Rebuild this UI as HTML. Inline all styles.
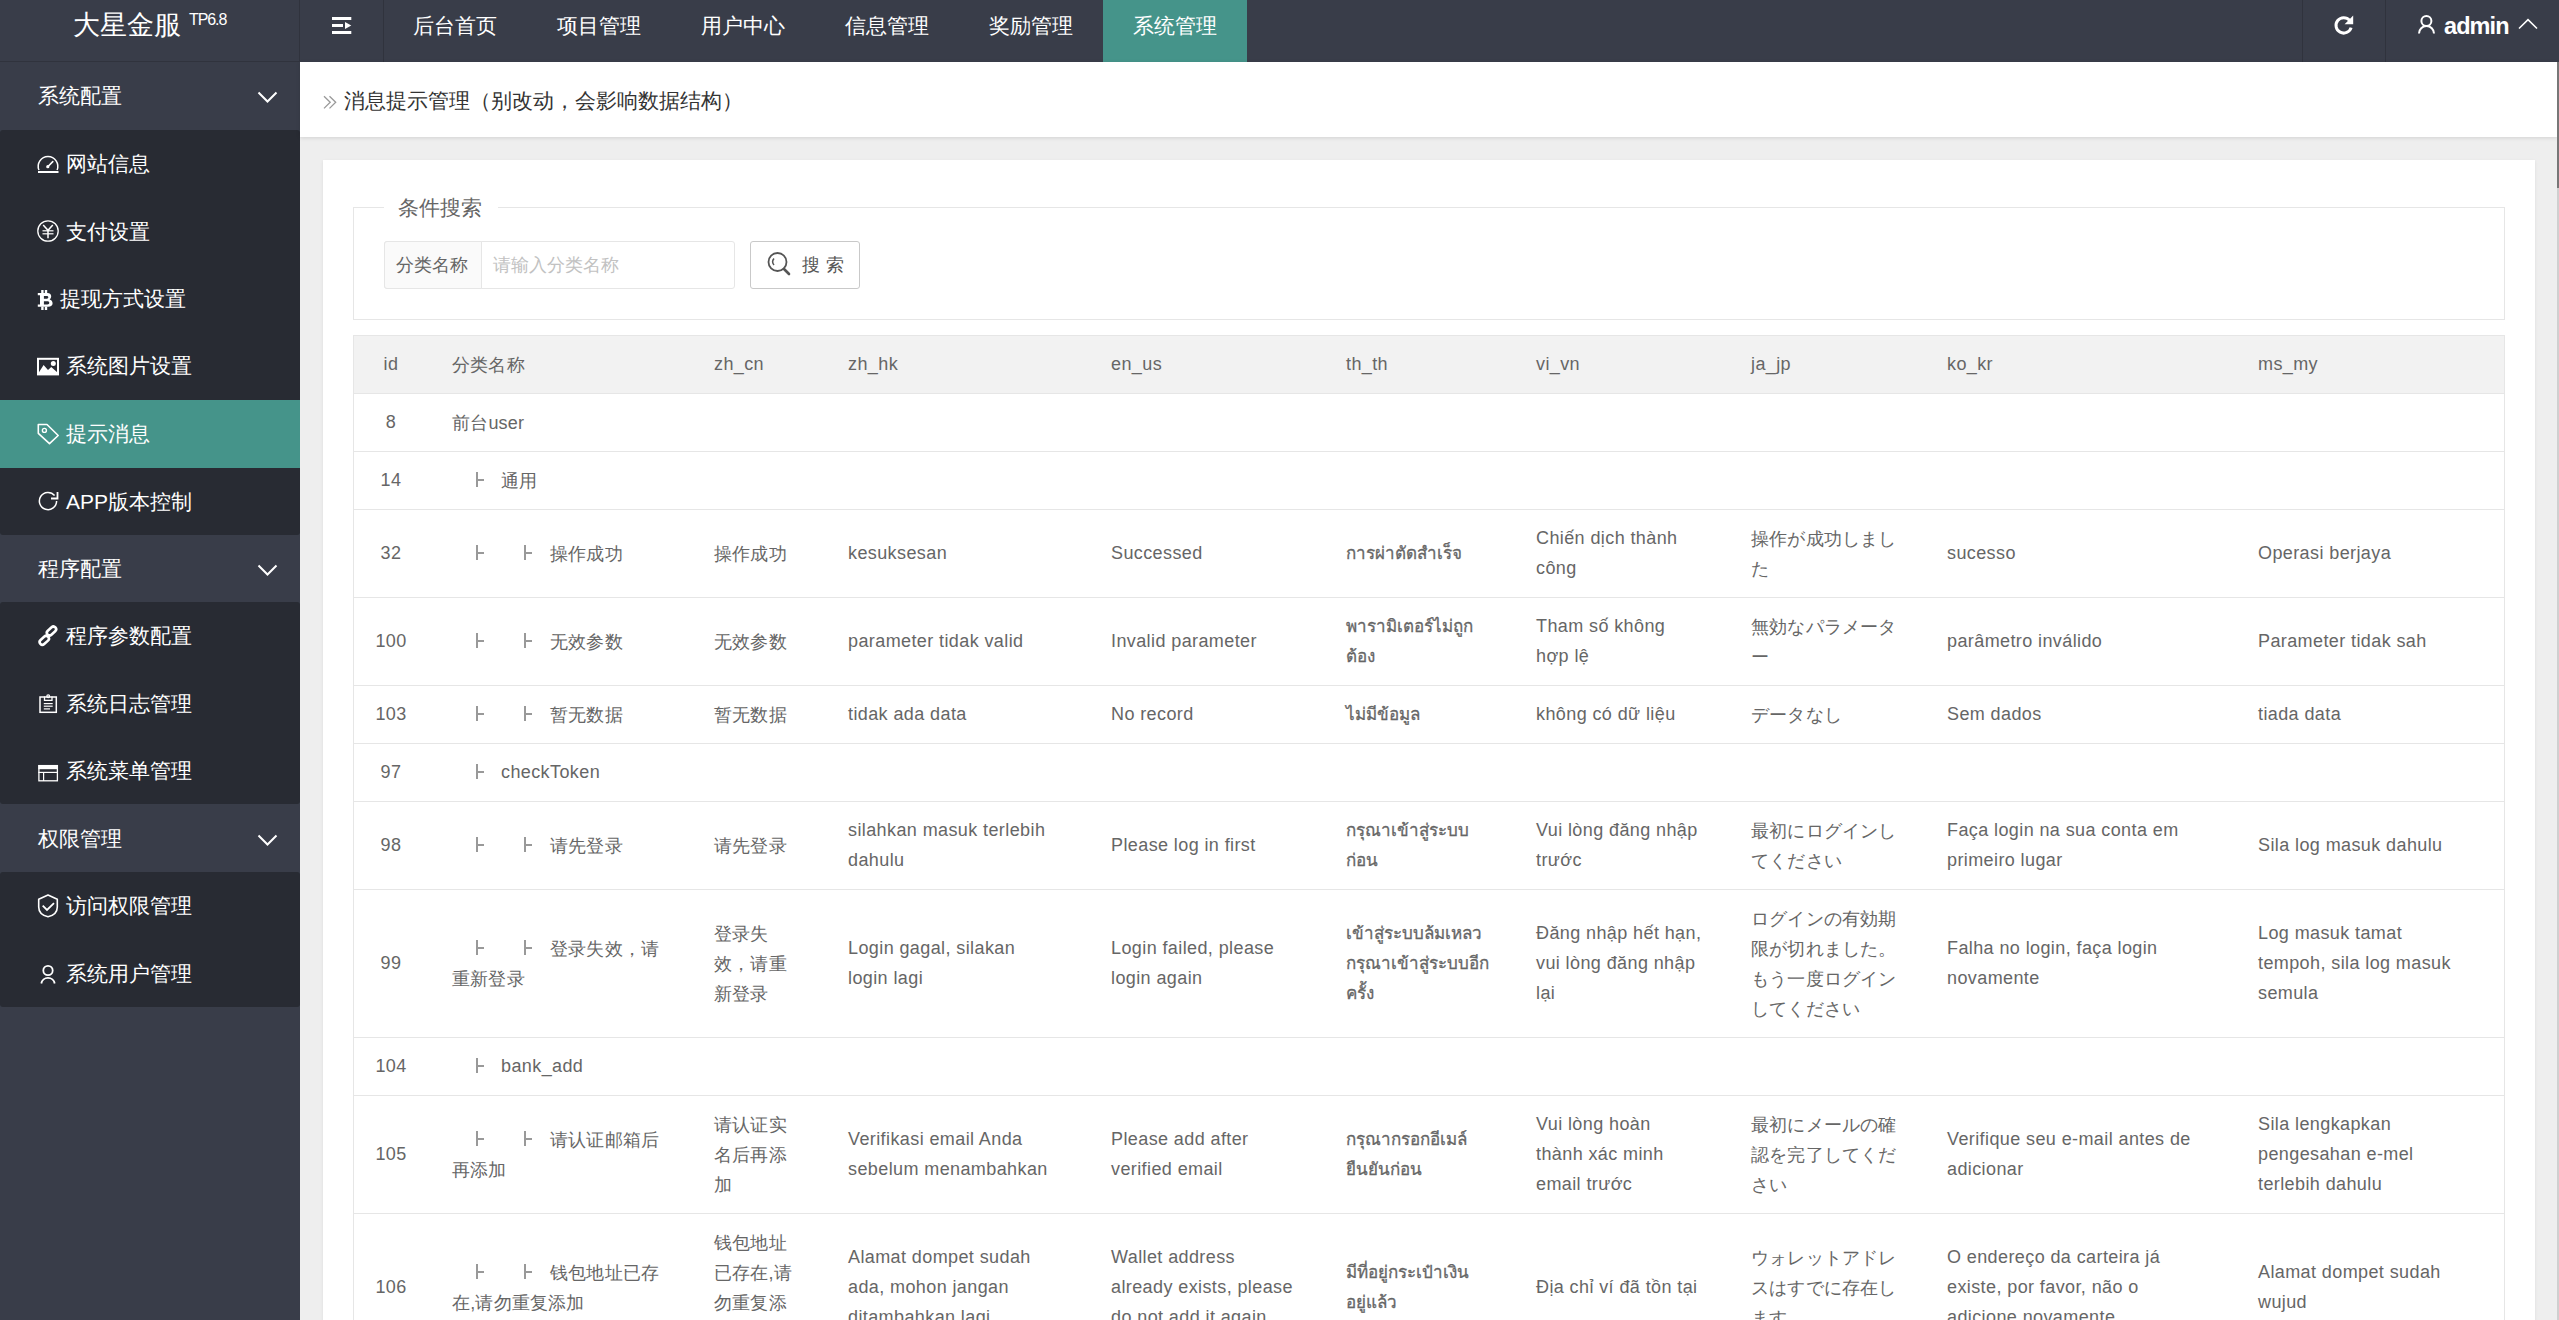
<!DOCTYPE html>
<html><head><meta charset="utf-8"><title>消息提示管理</title>
<style>
*{margin:0;padding:0;box-sizing:border-box}
html,body{width:2559px;height:1320px;overflow:hidden;background:#eee;font-family:"Liberation Sans",sans-serif}
.a{position:absolute}
.hdr{left:0;top:0;width:2559px;height:62px;background:#393d49}
.nav{top:0;height:62px;width:144px;color:#fff;font-size:21px;line-height:51px;text-align:center}
.side{left:0;top:62px;width:300px;height:1258px;background:#393d49}
.grp{left:0;width:300px;height:68px;color:#fff;font-size:21px}
.grp span{position:absolute;left:38px;top:0;line-height:68px}
.subb{left:0;width:300px;background:#282b33;border-radius:3px}
.it{left:0;width:300px;height:67.5px;color:#fff;font-size:21px}
.it span{position:absolute;left:66px;top:0;line-height:67px}
.it svg{position:absolute;left:37px}
.cell{color:#666;font-size:18px;line-height:30px;white-space:nowrap;letter-spacing:0.2px}
.th{font-size:17px;letter-spacing:0;-webkit-text-stroke:0.3px #666;margin-top:1px}
.lt{letter-spacing:0.4px}
.cj{margin-top:1px}
</style></head><body>

<div class="a hdr"></div>
<div class="a" style="left:0;top:61px;width:300px;height:1px;background:#30333d"></div>
<div class="a" style="left:73px;top:6px;color:#fff;font-size:27px;line-height:38px;white-space:nowrap">大星金服</div>
<div class="a" style="left:189px;top:10px;color:#fff;font-size:16px;line-height:20px;letter-spacing:-1.1px">TP6.8</div>
<div class="a" style="left:299px;top:0;width:1px;height:62px;background:#30333d"></div>
<div class="a" style="left:383px;top:0;width:1px;height:62px;background:#30333d"></div>
<div class="a" style="left:2302px;top:0;width:1px;height:62px;background:#30333d"></div>
<div class="a" style="left:2385px;top:0;width:1px;height:62px;background:#30333d"></div>
<svg class="a" style="left:0;top:0" width="400" height="62" viewBox="0 0 400 62" fill="#fff">
<rect x="332" y="17" width="19.3" height="3"/>
<rect x="332" y="24" width="11" height="3"/>
<polygon points="345,22 351.3,25.5 345,29"/>
<rect x="332" y="31" width="19.3" height="3"/>
</svg>
<div class="a nav" style="left:383px;">后台首页</div>
<div class="a nav" style="left:527px;">项目管理</div>
<div class="a nav" style="left:671px;">用户中心</div>
<div class="a nav" style="left:815px;">信息管理</div>
<div class="a nav" style="left:959px;">奖励管理</div>
<div class="a nav" style="left:1103px;background:#45948a;">系统管理</div>
<svg class="a" style="left:2300px;top:0" width="259" height="62" viewBox="2300 0 259 62" fill="none" stroke="#fff">
<path d="M2351.1 27.6 A7.7 7.7 0 1 1 2349.6 20.4" stroke-width="3"/>
<polygon points="2353.2,15.6 2353.2,24.2 2344.6,24.2" fill="#fff" stroke="none"/>
<circle cx="2426.4" cy="20.9" r="5" stroke-width="2"/>
<path d="M2419 33.5 A7.5 7.5 0 0 1 2434 33.5" stroke-width="2"/>
<polyline points="2519,28.5 2528,19.6 2537,28.5" stroke-width="1.6"/>
</svg>
<div class="a" style="left:2444px;top:9px;color:#fff;font-size:23.5px;font-weight:bold;line-height:34px;letter-spacing:-0.9px">admin</div>
<div class="a side"></div>
<div class="a grp" style="top:62px"><span>系统配置</span></div>
<svg class="a" style="left:256px;top:90px" width="24" height="14" viewBox="0 0 24 14"><polyline points="2.5,2.5 11.5,11.5 20.5,2.5" fill="none" stroke="#fff" stroke-width="2"/></svg>
<div class="a subb" style="top:130px;height:405px"></div>
<div class="a it" style="top:130px;height:68px;"><span style="left:66px">网站信息</span></div>
<div class="a it" style="top:198px;height:67px;"><span style="left:66px">支付设置</span></div>
<div class="a it" style="top:265px;height:67px;"><span style="left:60px">提现方式设置</span></div>
<div class="a it" style="top:332px;height:68px;"><span style="left:66px">系统图片设置</span></div>
<div class="a it" style="top:400px;height:68px;background:#45948a;"><span style="left:66px">提示消息</span></div>
<div class="a it" style="top:468px;height:67px;"><span style="left:66px">APP版本控制</span></div>
<div class="a grp" style="top:535px"><span>程序配置</span></div>
<svg class="a" style="left:256px;top:563px" width="24" height="14" viewBox="0 0 24 14"><polyline points="2.5,2.5 11.5,11.5 20.5,2.5" fill="none" stroke="#fff" stroke-width="2"/></svg>
<div class="a subb" style="top:602px;height:202px"></div>
<div class="a it" style="top:602px;height:68px;"><span style="left:66px">程序参数配置</span></div>
<div class="a it" style="top:670px;height:67px;"><span style="left:66px">系统日志管理</span></div>
<div class="a it" style="top:737px;height:67px;"><span style="left:66px">系统菜单管理</span></div>
<div class="a grp" style="top:805px"><span>权限管理</span></div>
<svg class="a" style="left:256px;top:833px" width="24" height="14" viewBox="0 0 24 14"><polyline points="2.5,2.5 11.5,11.5 20.5,2.5" fill="none" stroke="#fff" stroke-width="2"/></svg>
<div class="a subb" style="top:872px;height:135px"></div>
<div class="a it" style="top:872px;height:68px;"><span style="left:66px">访问权限管理</span></div>
<div class="a it" style="top:940px;height:67px;"><span style="left:66px">系统用户管理</span></div>
<svg class="a" style="left:0;top:0" width="300" height="1320" viewBox="0 0 300 1320" fill="none" stroke="#fff">
<path d="M38.93 170 A9.8 9.8 0 1 1 57.07 170" stroke-width="1.5"/>
<rect x="38" y="171" width="20.5" height="2" fill="#fff" stroke="none"/>
<line x1="47.8" y1="166.7" x2="52.8" y2="161.6" stroke-width="1.6" stroke-linecap="round"/>
<circle cx="47.8" cy="166.7" r="1.6" fill="#fff" stroke="none"/>

<circle cx="48" cy="231" r="10.2" stroke-width="1.3"/>
<polyline points="43.2,225 48,230.3 52.8,225" stroke-width="1.5"/>
<line x1="48" y1="230" x2="48" y2="238.2" stroke-width="1.5"/>
<line x1="42.5" y1="230.8" x2="53.5" y2="230.8" stroke-width="1.2"/>
<line x1="42.5" y1="233.8" x2="53.5" y2="233.8" stroke-width="1.2"/>

<g transform="translate(37,290)" fill="#fff" stroke="none">
<path fill-rule="evenodd" d="M0.8 3 H10.5 C13 3 14.2 4.3 14.2 6.2 C14.2 7.8 13.3 8.9 12.6 9.4 C14.3 9.9 15.6 11.2 15.6 13.2 C15.6 15.3 14 16.8 11.2 16.8 H0.8 V14.5 H3 V5.3 H0.8 Z M6.9 5.9 V8.8 H9.8 C10.8 8.8 11.3 8.2 11.3 7.35 C11.3 6.5 10.8 5.9 9.8 5.9 Z M6.9 11.2 V14.4 H10.3 C11.6 14.4 12.3 13.7 12.3 12.8 C12.3 11.9 11.6 11.2 10.3 11.2 Z"/>
<rect x="4.2" y="0" width="2.4" height="3.2"/><rect x="7.8" y="0" width="2.4" height="3.2"/>
<rect x="4.2" y="16.6" width="2.4" height="3.4"/><rect x="7.8" y="16.6" width="2.4" height="3.4"/>
</g>

<rect x="38" y="358.8" width="20" height="15.6" stroke-width="2"/>
<polygon points="38.5,373 43.6,365 48,370 51.2,367 57.5,372.5 57.5,374.5 38.5,374.5" fill="#fff" stroke="none"/>
<circle cx="53.3" cy="363.5" r="2.5" fill="#fff" stroke="none"/>

<polygon points="38.3,424.5 47,424.5 58.2,435.5 49.5,443.7 38.3,433.3" stroke-width="1.6" stroke-linejoin="round"/>
<circle cx="44.4" cy="430.4" r="2" stroke-width="1.4"/>

<path d="M56.6 501 A8.6 8.6 0 1 1 54.6 495.5" stroke-width="1.5"/>
<polyline points="51,498.5 57.5,498.5 57.5,492" stroke-width="1.8"/>

<rect x="-5.25" y="-2.7" width="10.5" height="5.4" rx="2.7" transform="translate(51.5,631) rotate(-42)" stroke-width="2.6"/>
<rect x="-5.25" y="-2.7" width="10.5" height="5.4" rx="2.7" transform="translate(44.3,640.3) rotate(-42)" stroke-width="2.6"/>

<rect x="40" y="697" width="16.3" height="15.3" stroke-width="1.5"/>
<path d="M44.5 696.5 V700.3 H52 V696.5" stroke-width="1.3"/>
<circle cx="48.2" cy="696.3" r="1.4" stroke-width="1.2"/>
<line x1="43.8" y1="703.6" x2="52.7" y2="703.6" stroke-width="1.2"/>
<line x1="43.8" y1="706.2" x2="52.7" y2="706.2" stroke-width="1.2"/>
<line x1="43.8" y1="708.9" x2="50" y2="708.9" stroke-width="1.2"/>

<rect x="38.9" y="765.6" width="18.5" height="15.2" stroke-width="1.3"/>
<rect x="38.3" y="765" width="19.7" height="4.2" fill="#fff" stroke="none"/>
<line x1="38.3" y1="772.4" x2="58" y2="772.4" stroke-width="1.2"/>
<line x1="43.6" y1="772.4" x2="43.6" y2="781" stroke-width="1.2"/>

<path d="M48 895 L57.3 899.3 L57.3 907 C57.3 912 53.5 915.5 48 916.8 C42.5 915.5 38.7 912 38.7 907 L38.7 899.3 Z" stroke-width="1.6" stroke-linejoin="round"/>
<polyline points="42.7,905.7 47,910 54,903.2" stroke-width="1.8"/>

<circle cx="48" cy="970.5" r="4.7" stroke-width="1.8"/>
<path d="M41.3 983.5 A6.8 6.8 0 0 1 54.7 983.5" stroke-width="1.8"/>
</svg>
<div class="a" style="left:300px;top:62px;width:2257px;height:75px;background:#fff;box-shadow:0 1px 4px rgba(0,0,0,.12)"></div>
<svg class="a" style="left:300px;top:62px" width="60" height="75" viewBox="300 62 60 75" fill="none" stroke="#999" stroke-width="1.3"><polyline points="324,96.2 330.2,102.3 324,108.4"/><polyline points="329.5,96.2 335.7,102.3 329.5,108.4"/></svg>
<div class="a" style="left:344px;top:86px;color:#333;font-size:21px;line-height:30px;white-space:nowrap">消息提示管理（别改动，会影响数据结构）</div>
<div class="a" style="left:2557px;top:62px;width:2px;height:1258px;background:#cfcfcf"></div>
<div class="a" style="left:2557px;top:62px;width:2px;height:126px;background:#777"></div>
<div class="a" style="left:323px;top:160px;width:2212px;height:1200px;background:#fff;box-shadow:0 1px 3px rgba(0,0,0,.08)"></div>
<div class="a" style="left:353px;top:207px;width:2152px;height:113px;border:1px solid #e6e6e6"></div>
<div class="a" style="left:384px;top:193px;width:114px;height:30px;background:#fff"></div>
<div class="a" style="left:398px;top:193px;color:#666;font-size:21px;line-height:30px;white-space:nowrap">条件搜索</div>
<div class="a" style="left:384px;top:241px;width:351px;height:48px;border:1px solid #e6e6e6;border-radius:3px;background:#fff"></div>
<div class="a" style="left:384px;top:241px;width:98px;height:48px;border:1px solid #e6e6e6;border-radius:3px 0 0 3px;background:#fafafa"></div>
<div class="a" style="left:396px;top:250px;color:#666;font-size:18px;line-height:30px;white-space:nowrap">分类名称</div>
<div class="a" style="left:493px;top:250px;color:#c2c2c2;font-size:18px;line-height:30px;white-space:nowrap">请输入分类名称</div>
<div class="a" style="left:750px;top:241px;width:110px;height:48px;border:1px solid #c9c9c9;border-radius:3px;background:#fff"></div>
<svg class="a" style="left:765px;top:250px" width="28" height="28" viewBox="0 0 28 28"><circle cx="12.5" cy="12" r="9" fill="none" stroke="#555" stroke-width="1.8"/><path d="M9 8.5 A5 5 0 0 0 9 15" fill="none" stroke="#555" stroke-width="1.5"/><line x1="19" y1="19" x2="24" y2="24" stroke="#555" stroke-width="2.6" stroke-linecap="round"/></svg>
<div class="a" style="left:802px;top:250px;color:#555;font-size:18px;line-height:30px;white-space:nowrap;letter-spacing:6px">搜索</div>
<div class="a" style="left:353px;top:335px;width:2152px;height:1100px;border:1px solid #e6e6e6;border-bottom:none"></div>
<div class="a" style="left:354px;top:336px;width:2150px;height:57px;background:#f2f2f2"></div>
<div class="a" style="left:353px;top:393px;width:2152px;height:1px;background:#e6e6e6"></div>
<div class="a cell lt" style="left:391px;top:349px;width:80px;margin-left:-40px;text-align:center">id</div>
<div class="a cell cj" style="left:452px;top:349px">分类名称</div>
<div class="a cell lt" style="left:714px;top:349px">zh_cn</div>
<div class="a cell lt" style="left:848px;top:349px">zh_hk</div>
<div class="a cell lt" style="left:1111px;top:349px">en_us</div>
<div class="a cell lt" style="left:1346px;top:349px">th_th</div>
<div class="a cell lt" style="left:1536px;top:349px">vi_vn</div>
<div class="a cell lt" style="left:1751px;top:349px">ja_jp</div>
<div class="a cell lt" style="left:1947px;top:349px">ko_kr</div>
<div class="a cell lt" style="left:2258px;top:349px">ms_my</div>
<div class="a" style="left:353px;top:451px;width:2152px;height:1px;background:#e6e6e6"></div>
<div class="a cell lt" style="left:391px;top:407px;width:80px;margin-left:-40px;text-align:center">8</div>
<div class="a cell cj" style="left:452px;top:407px">前台user</div>
<div class="a" style="left:353px;top:509px;width:2152px;height:1px;background:#e6e6e6"></div>
<div class="a cell lt" style="left:391px;top:465px;width:80px;margin-left:-40px;text-align:center">14</div>
<div class="a" style="left:476px;top:472px;width:2px;height:15px;background:#999"></div>
<div class="a" style="left:478px;top:479px;width:6px;height:2px;background:#999"></div>
<div class="a cell cj" style="left:501px;top:465px">通用</div>
<div class="a" style="left:353px;top:597px;width:2152px;height:1px;background:#e6e6e6"></div>
<div class="a cell lt" style="left:391px;top:538px;width:80px;margin-left:-40px;text-align:center">32</div>
<div class="a" style="left:476px;top:545px;width:2px;height:15px;background:#999"></div>
<div class="a" style="left:478px;top:552px;width:6px;height:2px;background:#999"></div>
<div class="a" style="left:524px;top:545px;width:2px;height:15px;background:#999"></div>
<div class="a" style="left:526px;top:552px;width:6px;height:2px;background:#999"></div>
<div class="a cell cj" style="left:550px;top:538px">操作成功</div>
<div class="a cell cj" style="left:714px;top:538px">操作成功</div>
<div class="a cell lt" style="left:848px;top:538px">kesuksesan</div>
<div class="a cell lt" style="left:1111px;top:538px">Successed</div>
<div class="a cell th" style="left:1346px;top:538px">การผ่าตัดสำเร็จ</div>
<div class="a cell lt" style="left:1536px;top:523px">Chiến dịch thành<br>công</div>
<div class="a cell cj" style="left:1751px;top:523px">操作が成功しまし<br>た</div>
<div class="a cell lt" style="left:1947px;top:538px">sucesso</div>
<div class="a cell lt" style="left:2258px;top:538px">Operasi berjaya</div>
<div class="a" style="left:353px;top:685px;width:2152px;height:1px;background:#e6e6e6"></div>
<div class="a cell lt" style="left:391px;top:626px;width:80px;margin-left:-40px;text-align:center">100</div>
<div class="a" style="left:476px;top:633px;width:2px;height:15px;background:#999"></div>
<div class="a" style="left:478px;top:640px;width:6px;height:2px;background:#999"></div>
<div class="a" style="left:524px;top:633px;width:2px;height:15px;background:#999"></div>
<div class="a" style="left:526px;top:640px;width:6px;height:2px;background:#999"></div>
<div class="a cell cj" style="left:550px;top:626px">无效参数</div>
<div class="a cell cj" style="left:714px;top:626px">无效参数</div>
<div class="a cell lt" style="left:848px;top:626px">parameter tidak valid</div>
<div class="a cell lt" style="left:1111px;top:626px">Invalid parameter</div>
<div class="a cell th" style="left:1346px;top:611px">พารามิเตอร์ไม่ถูก<br>ต้อง</div>
<div class="a cell lt" style="left:1536px;top:611px">Tham số không<br>hợp lệ</div>
<div class="a cell cj" style="left:1751px;top:611px">無効なパラメータ<br>ー</div>
<div class="a cell lt" style="left:1947px;top:626px">parâmetro inválido</div>
<div class="a cell lt" style="left:2258px;top:626px">Parameter tidak sah</div>
<div class="a" style="left:353px;top:743px;width:2152px;height:1px;background:#e6e6e6"></div>
<div class="a cell lt" style="left:391px;top:699px;width:80px;margin-left:-40px;text-align:center">103</div>
<div class="a" style="left:476px;top:706px;width:2px;height:15px;background:#999"></div>
<div class="a" style="left:478px;top:713px;width:6px;height:2px;background:#999"></div>
<div class="a" style="left:524px;top:706px;width:2px;height:15px;background:#999"></div>
<div class="a" style="left:526px;top:713px;width:6px;height:2px;background:#999"></div>
<div class="a cell cj" style="left:550px;top:699px">暂无数据</div>
<div class="a cell cj" style="left:714px;top:699px">暂无数据</div>
<div class="a cell lt" style="left:848px;top:699px">tidak ada data</div>
<div class="a cell lt" style="left:1111px;top:699px">No record</div>
<div class="a cell th" style="left:1346px;top:699px">ไม่มีข้อมูล</div>
<div class="a cell lt" style="left:1536px;top:699px">không có dữ liệu</div>
<div class="a cell cj" style="left:1751px;top:699px">データなし</div>
<div class="a cell lt" style="left:1947px;top:699px">Sem dados</div>
<div class="a cell lt" style="left:2258px;top:699px">tiada data</div>
<div class="a" style="left:353px;top:801px;width:2152px;height:1px;background:#e6e6e6"></div>
<div class="a cell lt" style="left:391px;top:757px;width:80px;margin-left:-40px;text-align:center">97</div>
<div class="a" style="left:476px;top:764px;width:2px;height:15px;background:#999"></div>
<div class="a" style="left:478px;top:771px;width:6px;height:2px;background:#999"></div>
<div class="a cell lt" style="left:501px;top:757px">checkToken</div>
<div class="a" style="left:353px;top:889px;width:2152px;height:1px;background:#e6e6e6"></div>
<div class="a cell lt" style="left:391px;top:830px;width:80px;margin-left:-40px;text-align:center">98</div>
<div class="a" style="left:476px;top:837px;width:2px;height:15px;background:#999"></div>
<div class="a" style="left:478px;top:844px;width:6px;height:2px;background:#999"></div>
<div class="a" style="left:524px;top:837px;width:2px;height:15px;background:#999"></div>
<div class="a" style="left:526px;top:844px;width:6px;height:2px;background:#999"></div>
<div class="a cell cj" style="left:550px;top:830px">请先登录</div>
<div class="a cell cj" style="left:714px;top:830px">请先登录</div>
<div class="a cell lt" style="left:848px;top:815px">silahkan masuk terlebih<br>dahulu</div>
<div class="a cell lt" style="left:1111px;top:830px">Please log in first</div>
<div class="a cell th" style="left:1346px;top:815px">กรุณาเข้าสู่ระบบ<br>ก่อน</div>
<div class="a cell lt" style="left:1536px;top:815px">Vui lòng đăng nhập<br>trước</div>
<div class="a cell cj" style="left:1751px;top:815px">最初にログインし<br>てください</div>
<div class="a cell lt" style="left:1947px;top:815px">Faça login na sua conta em<br>primeiro lugar</div>
<div class="a cell lt" style="left:2258px;top:830px">Sila log masuk dahulu</div>
<div class="a" style="left:353px;top:1037px;width:2152px;height:1px;background:#e6e6e6"></div>
<div class="a cell lt" style="left:391px;top:948px;width:80px;margin-left:-40px;text-align:center">99</div>
<div class="a" style="left:476px;top:940px;width:2px;height:15px;background:#999"></div>
<div class="a" style="left:478px;top:947px;width:6px;height:2px;background:#999"></div>
<div class="a" style="left:524px;top:940px;width:2px;height:15px;background:#999"></div>
<div class="a" style="left:526px;top:947px;width:6px;height:2px;background:#999"></div>
<div class="a cell cj" style="left:550px;top:933px">登录失效，请</div>
<div class="a cell cj" style="left:452px;top:963px">重新登录</div>
<div class="a cell cj" style="left:714px;top:918px">登录失<br>效，请重<br>新登录</div>
<div class="a cell lt" style="left:848px;top:933px">Login gagal, silakan<br>login lagi</div>
<div class="a cell lt" style="left:1111px;top:933px">Login failed, please<br>login again</div>
<div class="a cell th" style="left:1346px;top:918px">เข้าสู่ระบบล้มเหลว<br>กรุณาเข้าสู่ระบบอีก<br>ครั้ง</div>
<div class="a cell lt" style="left:1536px;top:918px">Đăng nhập hết hạn,<br>vui lòng đăng nhập<br>lại</div>
<div class="a cell cj" style="left:1751px;top:903px">ログインの有効期<br>限が切れました。<br>もう一度ログイン<br>してください</div>
<div class="a cell lt" style="left:1947px;top:933px">Falha no login, faça login<br>novamente</div>
<div class="a cell lt" style="left:2258px;top:918px">Log masuk tamat<br>tempoh, sila log masuk<br>semula</div>
<div class="a" style="left:353px;top:1095px;width:2152px;height:1px;background:#e6e6e6"></div>
<div class="a cell lt" style="left:391px;top:1051px;width:80px;margin-left:-40px;text-align:center">104</div>
<div class="a" style="left:476px;top:1058px;width:2px;height:15px;background:#999"></div>
<div class="a" style="left:478px;top:1065px;width:6px;height:2px;background:#999"></div>
<div class="a cell lt" style="left:501px;top:1051px">bank_add</div>
<div class="a" style="left:353px;top:1213px;width:2152px;height:1px;background:#e6e6e6"></div>
<div class="a cell lt" style="left:391px;top:1139px;width:80px;margin-left:-40px;text-align:center">105</div>
<div class="a" style="left:476px;top:1131px;width:2px;height:15px;background:#999"></div>
<div class="a" style="left:478px;top:1138px;width:6px;height:2px;background:#999"></div>
<div class="a" style="left:524px;top:1131px;width:2px;height:15px;background:#999"></div>
<div class="a" style="left:526px;top:1138px;width:6px;height:2px;background:#999"></div>
<div class="a cell cj" style="left:550px;top:1124px">请认证邮箱后</div>
<div class="a cell cj" style="left:452px;top:1154px">再添加</div>
<div class="a cell cj" style="left:714px;top:1109px">请认证实<br>名后再添<br>加</div>
<div class="a cell lt" style="left:848px;top:1124px">Verifikasi email Anda<br>sebelum menambahkan</div>
<div class="a cell lt" style="left:1111px;top:1124px">Please add after<br>verified email</div>
<div class="a cell th" style="left:1346px;top:1124px">กรุณากรอกอีเมล์<br>ยืนยันก่อน</div>
<div class="a cell lt" style="left:1536px;top:1109px">Vui lòng hoàn<br>thành xác minh<br>email trước</div>
<div class="a cell cj" style="left:1751px;top:1109px">最初にメールの確<br>認を完了してくだ<br>さい</div>
<div class="a cell lt" style="left:1947px;top:1124px">Verifique seu e-mail antes de<br>adicionar</div>
<div class="a cell lt" style="left:2258px;top:1109px">Sila lengkapkan<br>pengesahan e-mel<br>terlebih dahulu</div>
<div class="a" style="left:353px;top:1361px;width:2152px;height:1px;background:#e6e6e6"></div>
<div class="a cell lt" style="left:391px;top:1272px;width:80px;margin-left:-40px;text-align:center">106</div>
<div class="a" style="left:476px;top:1264px;width:2px;height:15px;background:#999"></div>
<div class="a" style="left:478px;top:1271px;width:6px;height:2px;background:#999"></div>
<div class="a" style="left:524px;top:1264px;width:2px;height:15px;background:#999"></div>
<div class="a" style="left:526px;top:1271px;width:6px;height:2px;background:#999"></div>
<div class="a cell cj" style="left:550px;top:1257px">钱包地址已存</div>
<div class="a cell cj" style="left:452px;top:1287px">在,请勿重复添加</div>
<div class="a cell cj" style="left:714px;top:1227px">钱包地址<br>已存在,请<br>勿重复添<br>加</div>
<div class="a cell lt" style="left:848px;top:1242px">Alamat dompet sudah<br>ada, mohon jangan<br>ditambahkan lagi</div>
<div class="a cell lt" style="left:1111px;top:1242px">Wallet address<br>already exists, please<br>do not add it again</div>
<div class="a cell th" style="left:1346px;top:1257px">มีที่อยู่กระเป๋าเงิน<br>อยู่แล้ว</div>
<div class="a cell lt" style="left:1536px;top:1272px">Địa chỉ ví đã tồn tại</div>
<div class="a cell cj" style="left:1751px;top:1242px">ウォレットアドレ<br>スはすでに存在し<br>ます</div>
<div class="a cell lt" style="left:1947px;top:1242px">O endereço da carteira já<br>existe, por favor, não o<br>adicione novamente</div>
<div class="a cell lt" style="left:2258px;top:1257px">Alamat dompet sudah<br>wujud</div>
</body></html>
